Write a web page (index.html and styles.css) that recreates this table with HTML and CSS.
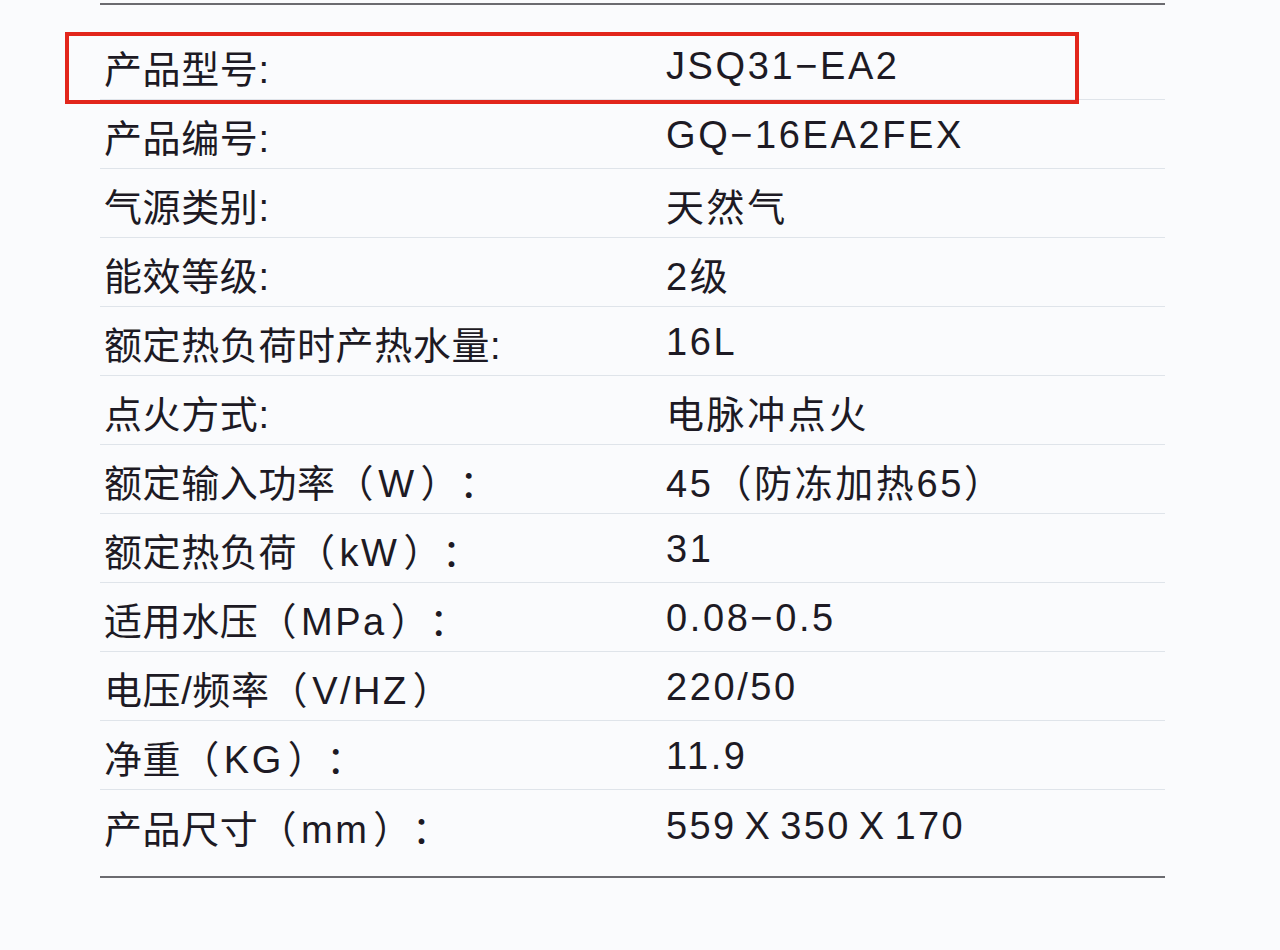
FILE: index.html
```html
<!DOCTYPE html>
<html lang="zh-CN">
<head>
<meta charset="utf-8">
<title>产品参数</title>
<link rel="stylesheet" href="styles.css">
</head>
<body>
<div class="page">
  <div class="spec">
    <div class="row highlight"><span class="label">产品型号:</span><span class="value">JSQ31−EA2</span></div>
    <div class="row"><span class="label">产品编号:</span><span class="value">GQ−16EA2FEX</span></div>
    <div class="row"><span class="label">气源类别:</span><span class="value">天然气</span></div>
    <div class="row"><span class="label">能效等级:</span><span class="value">2级</span></div>
    <div class="row"><span class="label">额定热负荷时产热水量:</span><span class="value">16L</span></div>
    <div class="row"><span class="label">点火方式:</span><span class="value">电脉冲点火</span></div>
    <div class="row"><span class="label">额定输入功率（<span class="en">W</span>）：</span><span class="value">45（防冻加热65）</span></div>
    <div class="row"><span class="label">额定热负荷（<span class="en">kW</span>）：</span><span class="value">31</span></div>
    <div class="row"><span class="label">适用水压（<span class="en">MPa</span>）：</span><span class="value">0.08−0.5</span></div>
    <div class="row"><span class="label">电压/频率（<span class="en">V/HZ</span>）</span><span class="value">220/50</span></div>
    <div class="row"><span class="label">净重（<span class="en">KG</span>）：</span><span class="value">11.9</span></div>
    <div class="row last"><span class="label">产品尺寸（<span class="en">mm</span>）：</span><span class="value dims">559 X 350 X 170</span></div>
  </div>
</div>
</body>
</html>
```

FILE: styles.css
```css
html, body {
  margin: 0;
  padding: 0;
  background: #fafbfd;
}

.page {
  width: 1280px;
  height: 950px;
  padding-top: 3px;
  box-sizing: border-box;
}

.spec {
  margin-left: 100px;
  width: 1065px;
  border-top: 2px solid #6b6b70;
  border-bottom: 2px solid #6b6b70;
  padding-top: 26px;
  padding-bottom: 17px;
  font-family: "Liberation Sans", "Noto Sans CJK SC", sans-serif;
  font-size: 38px;
  color: #1d1a24;
  text-spacing-trim: space-all;
}

.row {
  position: relative;
  display: flex;
  align-items: center;
  padding-top: 3px;
  box-sizing: border-box;
  height: 69px;
  border-bottom: 1px solid #dfe4ea;
}

.row.last {
  border-bottom: none;
}

.label {
  width: 562px;
  padding-left: 4px;
  letter-spacing: 0.6px;
  white-space: nowrap;
}

.label .en {
  letter-spacing: 2.5px;
  margin: 0 4px;
}

.value {
  letter-spacing: 2.6px;
  white-space: nowrap;
}

.value.dims {
  letter-spacing: 2.4px;
  word-spacing: -5px;
}

.highlight::after {
  content: "";
  position: absolute;
  left: -35px;
  top: 1px;
  width: 1006px;
  height: 64px;
  border: 4px solid #e2261c;
}
```
